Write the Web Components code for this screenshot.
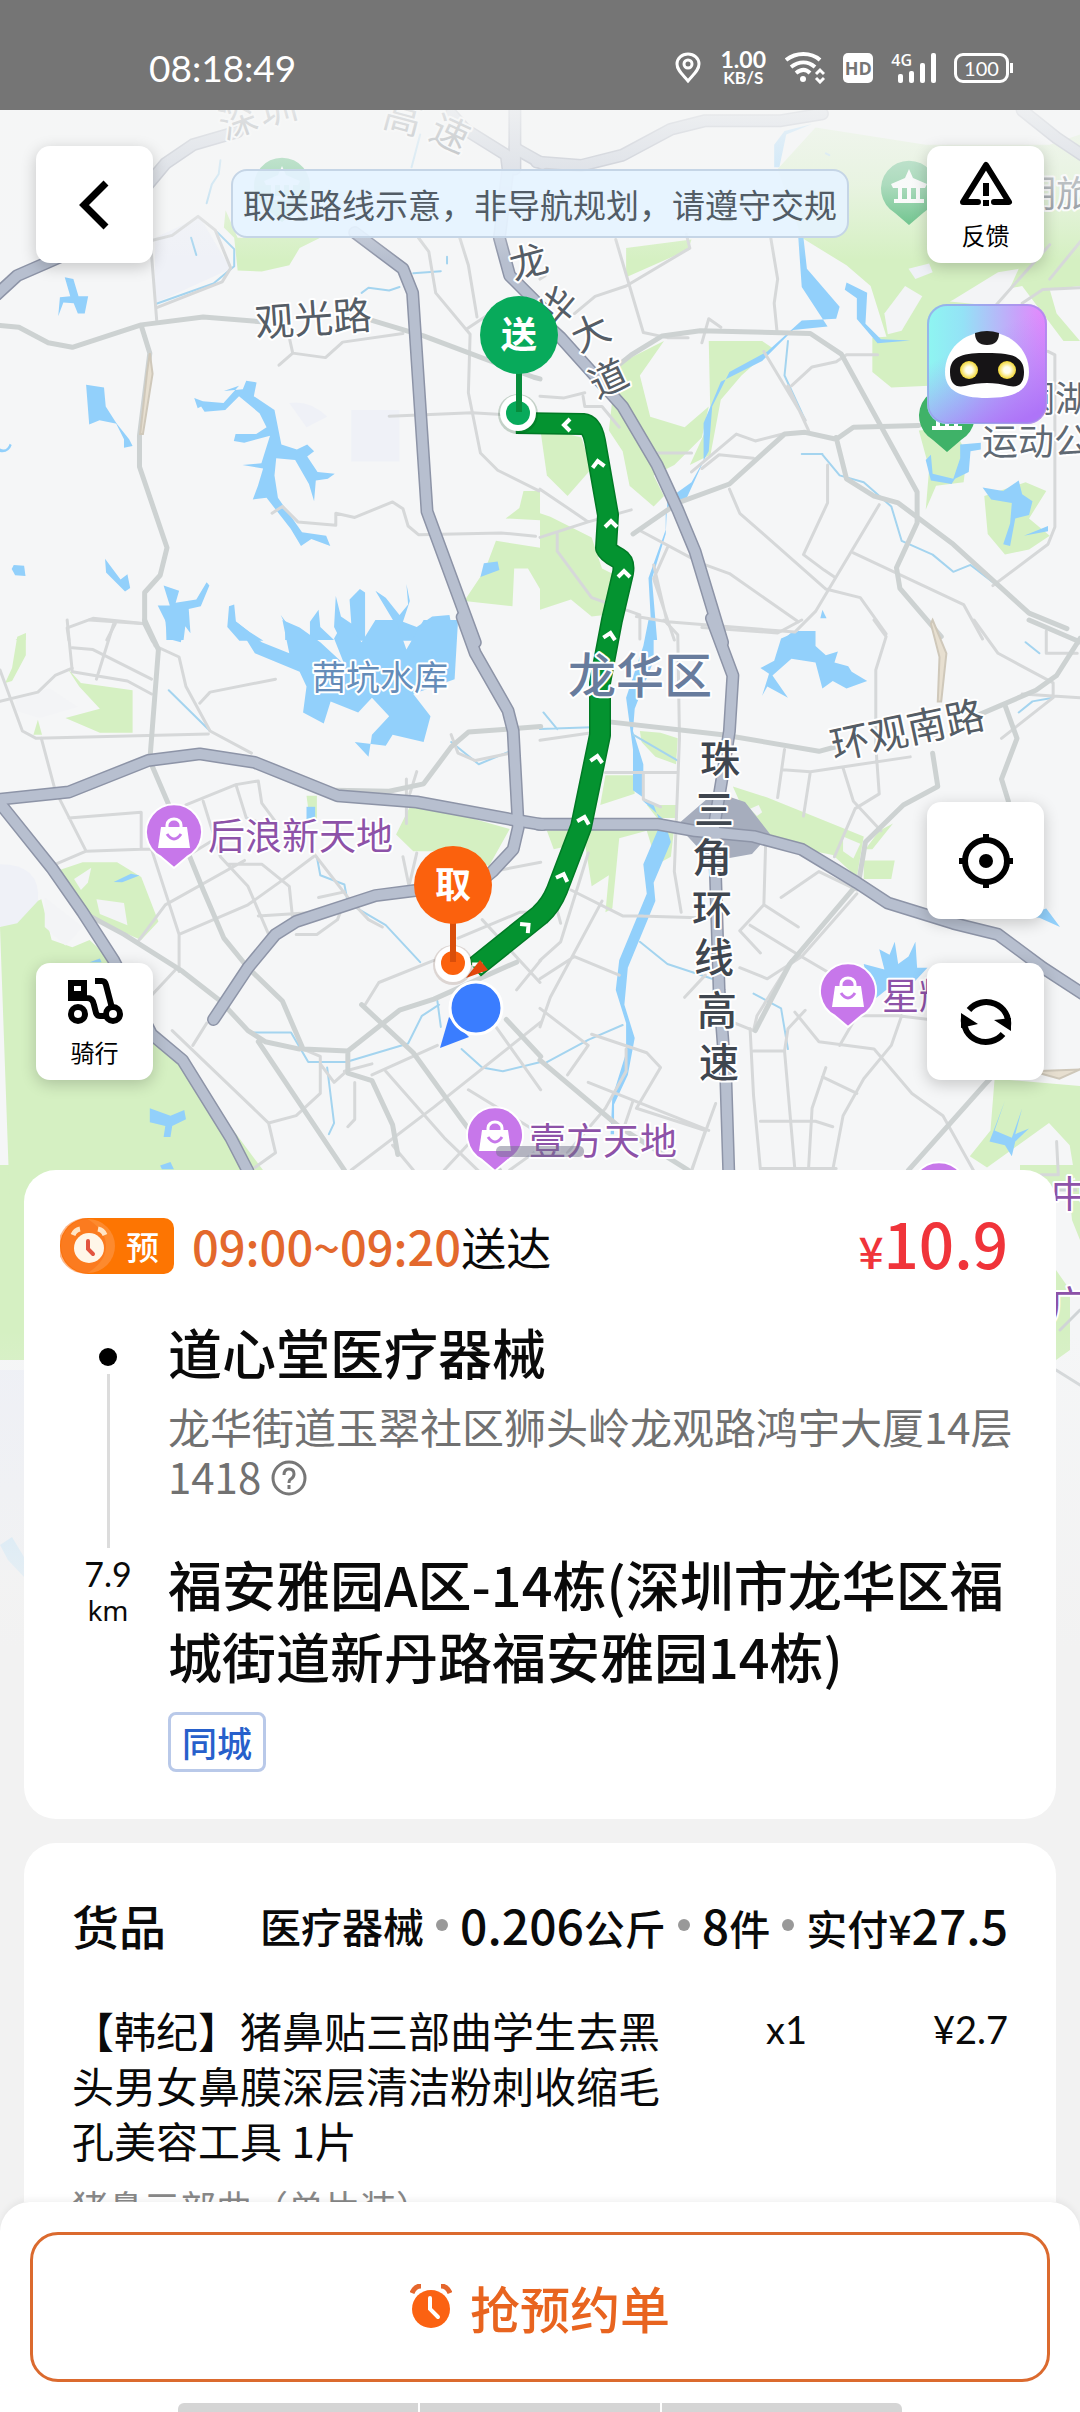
<!DOCTYPE html>
<html lang="zh-CN">
<head>
<meta charset="utf-8">
<meta name="viewport" content="width=device-width">
<title>预约单</title>
<style>
html,body{margin:0;height:100%}
body{font-family:"Noto Sans CJK SC","Noto Sans",sans-serif;color:#0a0a0a;background:#f2f2f2;--num:Lato,"Noto Sans CJK SC",sans-serif;--mid:"Noto Sans CJK SC",sans-serif}
</style>
</head>
<body>
<order-page></order-page>
<script>
const define=(name,html,setup)=>customElements.define(name,class extends HTMLElement{
  constructor(){super();this.attachShadow({mode:'open'}).innerHTML=html;if(setup)setup(this.shadowRoot,this)}
});

define('status-bar',`<style>
:host{display:flex;align-items:center;justify-content:space-between;height:110px;box-sizing:border-box;padding:26px 66px 0 149px;background:#757575;color:#fff;font-family:var(--num)}
time{font-size:37px;line-height:40px}
.icons{display:flex;align-items:center;gap:18px}
svg{display:block}
.rate{display:flex;flex-direction:column;align-items:center;font-size:23px;line-height:20px;font-weight:700;width:48px}
.rate small{font-size:17px;line-height:18px}
.hd{background:#fff;color:#757575;border-radius:5px;font:700 18px/30px "Open Sans",sans-serif;width:30px;text-align:center}
.sig{display:flex}
.sig span{font:600 16px/16px "Open Sans",sans-serif;margin-right:-16px}
.bat{border:3px solid #fff;border-radius:9px;font-size:20px;line-height:24px;width:49px;text-align:center;position:relative;margin-right:5px}
.bat::after{content:"";position:absolute;right:-7px;top:7px;width:3px;height:10px;background:#fff}
</style>
<time>08:18:49</time>
<div class="icons">
<svg width="26" height="32" viewBox="0 0 26 32" fill="none" stroke="#fff" stroke-width="3"><path d="M13 29C7 22 2 18 2 12a11 10 0 0 1 22 0c0 6-5 10-11 17z"/><circle cx="13" cy="12" r="4"/></svg>
<div class="rate"><span>1.00</span><small>KB/S</small></div>
<svg width="40" height="32" viewBox="0 0 40 32" fill="none" stroke="#fff" stroke-width="4"><path d="M1 8c10-8 25-8 34 0M6 15c8-6 17-6 24 0M11 21c5-4 10-4 14 0"/><circle cx="18" cy="27" r="3" fill="#fff" stroke="none"/><path d="M31 22l4-4 4 4M31 26l4 4 4-4" stroke-width="3"/></svg>
<div class="hd">HD</div>
<div class="sig"><span>4G</span><svg width="40" height="32" viewBox="0 0 40 32" fill="#fff"><rect x="2" y="22" width="5" height="9" rx="2"/><rect x="13" y="19" width="5" height="12" rx="2"/><rect x="24" y="11" width="5" height="20" rx="2"/><rect x="35" y="1" width="5" height="30" rx="2"/></svg></div>
<div class="bat">100</div>
</div>`);

/* Map geometry. The city is stored as four tiles, each with its own local grid. */
const tiles=[
{t:'translate(0 100) scale(.3444)',
 green:['M655 320L690 400 930 400 870 430 840 480 760 498 690 495 680 400 650 370z','M1520 1135l48 0v85l-100-5 40-30z','M1440 1280l128 20v120l-35-60-40 0-5 110-140-15 60-90z','M45 1568l30-20v20z'],
 haze:['M450 400l130-60 90 150-220 100z','M1020 900h140v150h-140z','M840 880q60-10 110 40l-60 30z'],
 water:['M188 515l25 5 15 50 28 0-10 50-20 0-12-30-30-2-15 40 5-55 30-3z','M250 827l52 8 5 55 32 50-50-10-30 12z','M335 935l40 50 10 20-25 5 0-25z','M0 1012q20 10 28-14l6 4q-8 24-34 20z','M40 1350l30 2 4 30-30-2-10-18z','M305 1332l45 60 20-15 8 40-15 10-55-55z','M475 1410l45 15-10 35 60-10 30-50 8 10-25 60-35 8 5 70-15-20-5 40h-50l0-50-25-50 35 0z','M650 845l55-5 10-25 30 5-8 40 60 40 20 100 45 15 30-15 20 20-20 15 30 45 50 5-20 15-35 5-5 60-15-50-40-70-55-5-5 50 10 65 70 100 70 10 12 30-55-20-30 20-30-50-70-90-40 5 15-40 15-50-60-10 55-5 25-80-75 20-30-5 5-20 60 0 30-20-20-40-60-50-40 40-60 5-10-15-10 5-10-30 25 10 60 5 45-50z','M665 1470l15-5 5 50 40 30 40 25h-70l-35-40z','M815 1495l30 40 3 33h-20l0-45z','M900 1515l25-35 5 50 40 38h-70z','M975 1440l15 60 30 20-5-70 30-30 15 10 0 75 0 65h-70l-20-40z','M1090 1425l30 20 40 50 25-30-5-60 10 50-20 60 40 15 45-30 50-5 15 75h-200l-20-50 50 5z','M1405 1345l40-5 5 25-55 20z'],
 stream:['M640 175l-5 40-20 30-15 55','M555 400l15 50','M1050 560l20-15 60 8 30-10','M1200 503l80-6M1298 455l0 20','M450 593l170-60 60-50 0-50-50-50','M1220 100l-25 95'],
 minor:['M437 235L440 450 455 640','M440 408l60-15 75-55 50 40 45 110-25 40-190 75','M840 690l10 45-40 35M850 735l95 13 50-45 175-25','M1215 400l30 40 20 120 100 120-5 170 35 175 50 50 120 60','M1335 400l25 80 25 150M1355 665l60-40M1130 918l240-10 160 10','M790 1200l30-20 45 45 110 10 0-35 55 12 110-45 30 20 15 50 30 25 240-5 100 10','M200 1568l-5-35 75-28 145 15M335 1520l-25 48'],
 mid:['M0 655l55 5 85 45 70 13 200-65 180-23 170 14','M1080 640l150 45 320 120 18 5','M410 655l25 80-30 240 0 90 80 235-20 80-45 50 0 90 25 50'],
 tan:['M435 735l8 60-28 175-8 0 20-180z'],
 major:['M690 92L560 130 480 185 300 400 130 475 50 510 -10 565','M1030 385L1170 490 1198 560 1240 1195 1380 1575','M1310 40L1350 85 1470 160 1475 200 1450 400 1480 510 1575 605','M1495 20L1495 200','M1495 140L1575 185']},
{t:'translate(540 100) scale(.3444)',
 green:['M690 200L800 80 1120 130 1480 130 1568 100 1568 540 1480 550 1500 620 1568 700 1520 700 1400 540 1300 560 1150 750 1130 830 1020 835 965 790 965 690 1100 680 1010 700 960 540 890 480 760 400z','M250 430l190-25-10 30-180 80z','M220 780l40-30 100-50-70 100 30 120 100 30 70-60-20 90-80 80-60 30 30 60-30 30-70-60-20-100-40-60z','M490 700l155 0 30 20-90 80-60 70-30 160-60 30 60-130z','M0 950l20 140 60 60 70-80-30-90z','M0 1200l30 10 120 60 30 90 80 40-30 90-80 10-60-50-90 30z','M1100 960l100-10 40 80-10 80-80 10-30 70 10-120z','M1290 1150l120-40 60 25-50 80 60 50-60 40-70 15-50-60z'],
 clear:['M1000 620l60-80 50 30-60 100-40 10z','M1200 580l130-80 60-10-50 110-150-15z'],
 haze:['M1070 490l60-15 10 25-50 20z'],
 water:['M750 400l15 0 10 90 95 110-10 35-100 5-100 90-110 60-50 100-10 130-50 90-70 50-5 100-40 130 15 178h-15l-10-180 50-140 0-60 60-30 50-110 0-110 50-120 120-60 90-90 100-10-75-115z','M890 530l60 30-5 90 45 45 85 3-95 8-60-70 0-60-35-25z','M1220 1000l60-5 0 20-30 5-5 60-40 20-10 15-60-10-15-60 15-15 5 55 60 15 20-60z','M1285 1125l60 10 45-30 10 40 30 20-10 40-40 10-15 80-20-5 20-60 5-60-60-10z','M1405 1265l70-28v15z','M820 1480l12 25h-18z','M705 1568l25-22 65 0 0 22z','M680 130l30-40 80-20-75 30-20 95h-15z'],
 stream:['M720 700l-10 100 60 130M820 1030l50 60 70 20 80 70 30 100 90 40 60 50 50-20 130 100M760 1028l60 0M830 155l10 5'],
 minor:['M220 405l80 270 70 15 60 0M0 520l15-10M100 620l60-50 90-30 185-110-10-40M670 400l20 120-10 70 8 80M470 705l20-70 35 25','M650 730l120 200M720 830l60 130M730 830l60-55 70-15 30-20 90 0','M835 1060l0 110-70 150 60 45 30 20M550 1130l30 70 250 220 100 25 75 105','M0 860l70 5 60-15M125 860l5 30 50 0 50 60M0 1130l140 95 125-35M0 1270l140-45M50 1260l0 50 100 135 140 50 0 70M440 1080l130-110 55 20 80-20M470 1070l50-40 100 10M270 1260l90-60M290 1250l150 80M370 1300l-40 90 60 178M330 1350l40 170M480 1350l70 25 200 140M280 1500l90 15 370 30 60-60 185-310','M910 1315l320 150 55 100M1475 730l20 10 0 500-20 50-160 120M1480 520l90-110 70-2M1320 600l160-180M1400 590l60-40 110-5M340 1025l100 0'],
 mid:['M215 780l50-40 90-55 110-15 320 8 90 60 220 400 0 90-60 130 10 60 120 140','M270 1260l130-90 150-55 160-145 60-5 90 20 50-35 190-5M860 980l30 120 80 50 70 20 160 120 220 200 110 45'],
 major:['M-10 180L120 190 240 160 380 85 480 60 700 60 820 40','M-5 630L60 690 150 790 240 890 340 1060 400 1190 450 1310 530 1575','M1400 30L1500 110 1575 160']},
{t:'translate(0 620) scale(.3444 .3699)',
 green:['M50 45l25-10 0 60-40 70-20 5 20-40z','M195 130l40 40 150 20 0 115-95 0-100-40 100-25-60-60z','M110 270l12 40-25 0z','M0 830l60-50 60-25 30 110 60 20 50-20 70 60 130 200 110 120 200 250 0 120-740 0z','M160 680l80-25 100 0 70 40 50 120-50 50-150-60-50-70z','M890 475l30 0 0 70-20 0z','M1150 580l40-75 60 0 230 60-60 100-130-40-90 0z'],
 clear:['M45 205l100-20 80 50-110 30-70-20z','M130 750l110 80-50 50-60-50z','M215 700l50-30-10 40-20 20z','M280 755l80 10 10 60-80-30z'],
 haze:['M0 660q120 0 110 100l-60 60-50 10z'],
 water:['M480 0h60l-15 60-40-10z','M680 0L740 90 870 140 890 180 880 250 940 280 960 220 1040 250 1080 210 1130 260 1080 310 1070 370 1030 330 1120 340 1140 310 1230 330 1250 260 1200 200 1320 160 1330 0 1230 0 1180 80 1150 0 1090 0 1050 60 1000 0 970 50 1000 120 930 60 870 20 820 0 840 90 760 60z','M890 505h25v35h-25z','M330 708l50-22 25 5-50 18z','M435 1320l60 20 40-15 5 25-40 18-5 30-20 0 5-30-45-10z','M465 1475l30-10 10 20h-35z','M260 925l30-10 5 10z'],
 stream:['M490 190l120 110M920 640l10 50 70 25 10 50 110 60 100 100M725 1115l120 0 50 80 110 0 180-50 40-75 50-30M950 1210l20 150-15 30M1270 1030l10 70M1340 1160l60 50 60 10 110-25M1310 330l80 60 90-35'],
 minor:['M195 0l15 140 160 25 70 35M210 75l60 5 170 80M330 10l-50 150M0 220l110-25 50-45 50-20M0 135l65 165 40 20 500-12M260 0l160 10 30 60 70 30 20 80 70 120 120 60M580 225l30-30 190-35','M120 320l40 140 90 165 160-5 0-100-210 15M410 620l30 0 80 230 0 100M150 665l100-40M540 500l145-55 65-10 10 60 40 50M685 445l30 90 60 20M590 490l50 150 80 80 60 130M480 770l230-120M520 850l200-80 90-60 100-70M400 870l80-100M750 800l170-10M910 630l100 120 60 60 40 20M860 850l60 0 60-40 20-50M660 660l100 0 80 60 10 90M610 600l-70 40','M600 1090l-40 60M500 1110l280 250 20 80-60 40M780 1360l80-20 70-60 0-100-50-20M515 940l-80 80M930 1200l40 50 30-25M1030 1250l0 100-20 20M1170 640l20 90M1060 1040l40-60 160-60M1190 710l20-80M925 750l75-15M1190 470l20-60 M1310 310l20 50 50 20 100-20','M1080 1230l190-80M1120 1220l170 180 100 90M1020 1487l240-170 310-230M1000 1220l80-20M1360 1270l210 120M1400 810l168 170M1330 860l180-70 60 0M1440 1100l130 170M1500 1000l70-80M1480 1487l90-60M1290 1487l110-110M1140 1420l60 67','M1180 430l0 120M1430 680l140-25'],
 mid:['M420 0l40 80-25 300 60 130M490 500l100 230 60 130 70 80 100 90 60 130 130 5 0 60 70 20 60 120 15 80M260 800l100 50 170 100 110 80 80 80 50 30 100 20M750 1140l250 347M1050 1040l150 130 140 180 110 137M1010 1165l150-110 100-30 240-100M1470 1080l100 100M970 460l160 3 100-20 80-100 50-40 210-15'],
 major:['M-5 485L200 465 430 380 580 362 740 385 980 475 1210 492 1490 540 1575 553','M-5 490L150 670 240 790 330 920 440 1120 530 1190 670 1400 720 1490','M1342 -8L1380 90 1475 245 1490 300 1505 560 1490 620 1430 680 1390 710 1200 732 1090 745 860 815 800 850 720 940 620 1080']},
{t:'translate(540 620) scale(.3444 .3699)',
 green:['M290 300l60 5 50 15-5 70-60-20-40-40z','M190 420l80 0 5 50-100 30z','M20 570l370-10-10 80-40 20-30-90-80 20-20 190-20 10 10-100-50 30-20-120-90 20z','M560 450l100 30 280 105-20 110-70-60-160-30-80-50z','M945 620l40-50 40-20-60 70zM940 650l90 0-10 50-80 0z','M310 500h90v35h-60z','M1320 1240l248 20 0 330-30-170-60-60-180 120-50-30 60-70z'],
 clear:['M880 585l50 20-20 40-30-20z','M610 510l25-10 10 20-15 10z'],
 water:['M315 0h15l0 110-55 130-5 60 30 90 0 100 60 50 20 60-50 110 5 50-80 180-10 100 30 90-20 100-40 80 0 80h-10l5-100 40-120 0-80-30-90 10-80 80-180-10-80 50-110-20-50-60-40 0-110-10-70-10-70 50-140z','M640 130l40-20 20-60 50-20 50 0 0 40 30 25 35-10-10 30 40 10 10 15 45 25-60 20-40-20-30 20-20-70-70-10-55 45 45 60-60-30-15 25 20-60z','M1400 800l70-20 40 50-60-25z','M940 930l60 15-15-55 30 15 15-35 10 60 30-20 20-40 5 70 30 0-50 50-70 10-40 30z','M1350 1300l-30 80 50 20 30-80-20 70 40-15-40 35-10 40-20-30-45-10z'],
 stream:['M0 295l150-5M10 250l40 45M270 310l130 70M290 870l80 60 130 40M620 1010l80 40 20 110M20 1195l120-60 100-40M1410 60l40 30M1390 250l40-30 60-10'],
 minor:['M0 325l150-20M190 412l210 0M300 415l0 70 50 20M360 0l40 40 5 280-15 360 20 110M970 0l35 45-30 90 0 200M470 20l220 15 70-35M1260 0l70 90 160 80 0 40-150 110M1470 30l0 60 90 0M1400 200l168 10','M710 350l-20 130M705 405l80 5 290-40M785 410l-20 120M880 400l30 90 80 80M975 340l10 130-70 40-60 130M700 750l110-70 110 50M655 610l-5 160-70 70 60 60M650 770l100 60M1140 300l10 20','M290 800l170 5M180 760l-150 260-30 80M90 730l150 70 60 0M0 920l60-50 80-240M0 970l100-60 130 50M60 820l-20-70M610 825l140 80 110 60M580 940l80 30 100-60 160-170M540 1080l80 30 10-40 100-150M420 1020l60-60M0 1050l140 100-60 80M150 1120l160 50 40 40-70 110 200 60-40 110M80 1440l110-120 60-100 0-60M140 1250l350 130M270 1300l-40 110M440 1487l70-180','M620 1165l90 0 30 320M610 1105l10 180 20 200M710 1165l10-60 50-50M640 1355l160 0 50 15M640 1483l220 0M740 1060l70 80 160 20 110 120 90 60 90 150M1050 1070l-30 80-80 90-60 100-30 147M830 1210l-40 110-10 160M820 1235l100 45M870 1150l50-80 120 0 90 10','M1500 1410l5 90-50 0'],
 mid:['M150 270l380 40 280 45 60-15M1240 270l200-80 60-40 68-100M1350 230l35 90-45 110 20 60M1140 360l15 90-100 50-110 100-20 110-200 220-100 180M1070 1487l220-230 60-60M1420 0l150 60M0 1190l230 180 200 117'],
 tan:['M1140 0l40 90-15 130-10 0 5-120-25-90z','M1430 1220l138-5-60 25z'],
 major:['M498 -5L560 150 550 300 530 420 505 560 510 700 520 1000 540 1250 548 1490','M-5 552L340 552 450 570 620 585 760 620 920 710 1010 765 1200 820 1330 850 1460 940 1575 1010']}
];
const layer=(key,attrs)=>tiles.map(t=>(t[key]?`<g transform="${t.t}" ${attrs}>${t[key].map(d=>`<path d="${d}"/>`).join('')}</g>`:'')).join('');
const line=(c,w)=>`fill="none" stroke="${c}" stroke-width="${w}" stroke-linejoin="round" stroke-linecap="round"`;
const bagPin=(x,y)=>`<g transform="translate(${x} ${y})"><path d="M0 34L-13 23A28 28 0 1 1 13 23z" fill="#c777ea" stroke="#fff" stroke-width="2"/><path d="M-13-7h26l3 21h-32z" fill="#fff"/><path d="M-7-6v-3a7 6 0 0 1 14 0v3" fill="none" stroke="#fff" stroke-width="3"/><path d="M-7 0q7 10 14 0" fill="none" stroke="#c777ea" stroke-width="3"/></g>`;
const parkPin=(x,y)=>`<g transform="translate(${x} ${y})"><path d="M0 36L-14 24A28 28 0 1 1 14 24z" fill="#3fb268"/><path d="M0-20l4 9 14 6-2 4h-32l-2-4 14-6zM-11-1h4v11h-4zM-2-1h4v11h-4zM7-1h4v11h-4zM-15 10h30v4h-30z" fill="#fff"/></g>`;
const chevrons=[[566,425,-90],[598,463,-8],[611,523,0],[624,573,0],[610,635,12],[597,758,10],[584,819,15],[563,876,20],[527,926,50],[479,966,45]];
const route='M516 423L583 424Q592 425 595 441L608 515 606 548Q608 553 618 558 625 562 623 573L612 620 600 683 600 735 581 827 557 890 Q551 905 540 915L474 968';

define('city-map',`<style>
:host{display:block;overflow:hidden}
svg{display:block;width:100%}
path{vector-effect:non-scaling-stroke}
text{font-family:"Noto Sans CJK SC",sans-serif;paint-order:stroke;stroke:#fff;stroke-width:4px;stroke-linejoin:round}
.poi{fill:#8d52a8;font-size:37px}.road{fill:#555d66;font-size:38px}.park{fill:#5f6973;font-size:36px}
.mid{text-anchor:middle}.pin{fill:#fff;stroke:none;font-size:36px;font-weight:700;text-anchor:middle}
</style>
<svg viewBox="0 110 1080 1690" aria-label="地图">
<defs>
<linearGradient id="top" x1="0" y1="0" x2="0" y2="1"><stop offset="0" stop-color="#f5f6f6" stop-opacity=".88"/><stop offset=".5" stop-color="#f5f6f6" stop-opacity=".6"/><stop offset="1" stop-color="#f5f6f6" stop-opacity="0"/></linearGradient>
<linearGradient id="end" x1="0" y1="0" x2="0" y2="1"><stop offset="0" stop-color="#f2f2f2" stop-opacity="0"/><stop offset="1" stop-color="#f2f2f2"/></linearGradient>
</defs>
<path fill="#f5f6f7" d="M0 110h1080v1690H0z"/>
<path fill="#d5f0c2" d="M0 1165h60v195H0zM1020 1165h60v10l-40 20-20 10zM1068 1180h12v60l-8-20zM1056 1270l14 20v60l-14 10z"/>
<path fill="#eef0f6" d="M0 1370h24v200H0z"/><path fill="#b9e1fb" d="M0 1545l12-8 12 20v20L8 1560z"/>
<path ${line('#d0d4d6',3)} d="M1056 1190h24M1060 1330l20-20M1056 1370l24 15"/>
${layer('green','fill="#d5f0c2"')}${layer('clear','fill="#f3f4f6"')}${layer('haze','fill="#eff1f7"')}${layer('water','fill="#92d0fb"')}${layer('stream',line('#a4d4ef',2))}
${layer('minor',line('#d6d8d9',3))}${layer('mid',line('#cdd2d2',5))}${layer('tan','fill="#e7dfd0" stroke="#cfc8ba" stroke-width="2"')}
<path fill="#a6adbd" d="M677 825l38-33 30 10 25 32-18 20-28 5-8 8z"/>
${layer('major',line('#8d94a7',13))}${layer('major',line('#b7bfcf',10))}
${parkPin(282,186)}${parkPin(909,189)}${parkPin(947,416)}
<text class="road mid" x="244 282 400 446" y="140 127 126 138" rotate="-20 -15 15 25">深圳高速</text>
<text class="park" x="1020" y="207">明旅</text>
<path fill="url(#top)" d="M0 110h1080v150H0z"/>
<path fill="none" stroke="#007a25" stroke-width="22" stroke-linejoin="round" d="${route}"/>
<path fill="none" stroke="#049330" stroke-width="19" stroke-linejoin="round" d="${route}"/>
<g fill="none" stroke="#fff" stroke-width="4">${chevrons.map(c=>`<path transform="translate(${c[0]} ${c[1]}) rotate(${c[2]})" d="M-6 4L0-2 6 4"/>`).join('')}</g>
${bagPin(174,834)}${bagPin(495,1137)}${bagPin(848,993)}${bagPin(939,1192)}
<text class="road" x="256" y="337" transform="rotate(-4 256 337)" style="font-size:39px">观光路</text>
<text class="road mid" x="533 575 598 616" y="280 330 353 399" rotate="-15 -50 -25 -25">龙华大道</text>
<text class="road mid" x="720 714 712 712 714 717 719" y="774 824 872 924 972 1025 1077" style="fill:#3f464f;font-size:40px;font-weight:500">珠三角环线高速</text>
<text class="road" x="834" y="760" transform="rotate(-12 834 760)" style="font-size:39px">环观南路</text>
<text x="568" y="693" font-size="48" style="fill:#687c9d;font-weight:500">龙华区</text>
<text x="312" y="690" font-size="34" style="fill:#648cb9">茜坑水库</text>
<text class="poi" x="208" y="850">后浪新天地</text><text class="poi" x="529" y="1155">壹方天地</text><text class="poi" x="882" y="1010">星耀</text>
<text class="poi" x="1051" y="1208">中</text><text class="poi" x="1050" y="1318">广</text>
<text class="park" x="1019" y="412">澜湖</text><text class="park" x="982" y="455">运动公</text>
<circle cx="518" cy="414" r="20" fill="#00400f" fill-opacity=".2"/><circle cx="518" cy="413" r="18" fill="#fff"/><circle cx="518" cy="413" r="12" fill="#08aa5b"/><path d="M519 370v42" stroke="#078c3c" stroke-width="6"/><circle cx="519" cy="335" r="39" fill="#08aa5b"/><text class="pin" x="519" y="348">送</text>
<path d="M466 978L480 960 488 970z" fill="#e3470c"/><circle cx="453" cy="965" r="20" fill="#501800" fill-opacity=".15"/><circle cx="453" cy="964" r="18" fill="#fff"/><circle cx="453" cy="963" r="12" fill="#fb610d"/><path d="M453 920v42" stroke="#d94e0a" stroke-width="6"/><circle cx="453" cy="885" r="39" fill="#fb610d"/><text class="pin" x="453" y="898">取</text>
<path d="M440 1048L449 1017 469 1037z" fill="#3a7dff"/><circle cx="476" cy="1008" r="26" fill="#3a7dff" stroke="#fff" stroke-width="3"/>
<rect x="496" y="1146" width="88" height="11" rx="5" fill="#71718a" fill-opacity=".5"/>
<path fill="url(#end)" d="M0 1330h1080v320H0z"/><path fill="#f2f2f2" d="M0 1649h1080v151H0z"/>
</svg>`);

define('map-button',`<style>
:host{display:block;width:117px;height:117px}
button{all:unset;box-sizing:border-box;width:100%;height:100%;border-radius:14px;background:#fff;box-shadow:0 4px 16px #0003;display:flex;flex-direction:column;align-items:center;justify-content:center;gap:9px;font-size:24px;line-height:28px;color:#000}
</style><button><slot></slot></button>`,(root,el)=>root.querySelector('button').setAttribute('aria-label',el.getAttribute('label')||''));

define('map-controls',`<style>
:host{display:grid;grid-template-columns:117px 1fr 120px;height:1060px;box-sizing:border-box;padding:36px 33px 90px 36px}
.l,.r{display:flex;flex-direction:column}
.l{justify-content:space-between}
.n{justify-self:center;align-self:start;margin-top:23px;box-sizing:border-box;padding:1px 10px 0;border:2px solid #c5d5e6;border-radius:16px;background:#e6f3ffe8;color:#525c66;font-size:33px;line-height:64px;white-space:nowrap}
.bot{margin:41px 0 auto;display:block;border:0;padding:0;background:none;width:120px;height:120px}
.r map-button:last-child{margin-top:44px}
svg{display:block}
span{padding-top:4px}
</style>
<div class="l">
<map-button label="返回"><svg width="34" height="52" viewBox="0 0 34 52"><path d="M28 4L6 26l22 22" fill="none" stroke="#000" stroke-width="7"/></svg></map-button>
<map-button label="骑行"><svg width="56" height="48" viewBox="0 0 56 48" fill="none" stroke="#000" stroke-width="6"><path d="M4 6h13v11H4zM1 21h19q6 0 7 7l2 8q1 3 4 3h5M28 4h7q3 0 4 4l6 23"/><circle cx="11" cy="37" r="7"/><circle cx="46" cy="37" r="7"/></svg><span>骑行</span></map-button>
</div>
<div class="n">取送路线示意，非导航规划，请遵守交规</div>
<div class="r">
<map-button label="反馈"><svg width="54" height="48" viewBox="0 0 54 48" fill="none" stroke="#000" stroke-width="6" stroke-linejoin="round"><path d="M19 42H4L27 5l23 37H35" stroke-linecap="round"/><path d="M27 23v13M27 40v6"/></svg><span>反馈</span></map-button>
<button class="bot" aria-label="智能助手"><svg width="120" height="120" viewBox="0 0 120 120">
<defs><linearGradient id="g" x1="0" y1="0" x2="1" y2="0"><stop offset="0" stop-color="#8ef6f1"/><stop offset=".3" stop-color="#94e2f6"/><stop offset=".75" stop-color="#c8a2fa"/><stop offset="1" stop-color="#ea84fd"/></linearGradient><linearGradient id="h" x1=".4" y1=".3" x2=".75" y2="1"><stop offset="0" stop-color="#a890f8" stop-opacity="0"/><stop offset="1" stop-color="#ae74f8"/></linearGradient><radialGradient id="e"><stop offset=".35" stop-color="#fffef0"/><stop offset="1" stop-color="#f3d72f"/></radialGradient></defs>
<rect width="120" height="120" rx="20" fill="url(#g)"/><rect x="1" y="1" width="118" height="118" rx="19" fill="url(#h)" stroke="#9a8ee6" stroke-opacity=".6" stroke-width="2"/>
<path d="M60 28c24 0 42 18 42 40 0 18-14 26-42 26S18 86 18 68c0-22 18-40 42-40z" fill="#fff"/><path d="M48 29q12-4 24 0 0 12-12 12T48 29z" fill="#1c1a1c"/>
<path d="M60 49c22 0 37 2 37 19 0 12-6 16-15 14-14-4-30-4-44 0-9 2-15-2-15-14 0-17 15-19 37-19z" fill="#161416"/><circle cx="42" cy="66" r="9" fill="url(#e)"/><circle cx="80" cy="66" r="9" fill="url(#e)"/></svg></button>
<map-button label="定位"><svg width="56" height="56" viewBox="0 0 56 56" fill="none" stroke="#000" stroke-width="6"><circle cx="28" cy="28" r="21"/><path d="M28 1v8M28 47v8M1 28h8M47 28h8"/><circle cx="28" cy="28" r="7" fill="#000" stroke="none"/></svg></map-button>
<map-button label="刷新"><svg width="52" height="52" viewBox="0 0 52 52" fill="none" stroke="#000" stroke-width="6"><path d="M9 14a22 21 0 0 1 39 16M43 38A22 21 0 0 1 4 22"/><path d="M34 24l17-2 0 13zM18 28l-17 4V17z" fill="#000" stroke="none"/></svg></map-button>
</div>`);

define('sheet-card',`<style>:host{display:block;background:#fff;border-radius:32px;box-sizing:border-box}</style><slot></slot>`);

define('trip-card',`<style>
sheet-card{padding:44px 48px 46px 36px;height:649px}
header{display:flex;align-items:center;height:64px}
.badge{display:flex;align-items:center;box-sizing:border-box;width:114px;height:56px;border-radius:28px 10px 10px 28px;background:#fd7502;color:#fff;font-size:33px;font-weight:500;line-height:56px}
.badge svg{display:block;margin-right:11px}
.time{margin-left:18px;font-size:45px;line-height:66px}
.time b{font:500 47px/66px var(--mid);color:#e3682c}
.price{margin-left:auto;font:500 44px/64px var(--mid);color:#f0343a}
.price b{font:inherit;font-size:62px}
.route{display:grid;grid-template-columns:96px 1fr;padding-left:12px;margin:34px -6px 0 0}
.rail{display:flex;flex-direction:column;align-items:center;width:72px}
.dot{width:18px;height:18px;border-radius:50%;background:#000;margin:36px 0 8px}
.bar{width:3px;flex:1;background:#dcdcdc}
.km{width:72px;text-align:center;font:400 34px/36px var(--num);padding-top:8px}
.km small{display:block;font-size:28px;line-height:36px;font-family:"Noto Sans",sans-serif}
h2{margin:0;font-size:54px;line-height:72px;font-weight:500}
.from h2{line-height:80px}
.from p{margin:9px 0 47px;font-size:42px;line-height:50px;color:#717171;white-space:nowrap}
.from svg{vertical-align:-2px}
.tag{display:inline-block;margin-top:20px;border:3px solid #b9c9e9;border-radius:8px;padding:0 11px;font-size:35px;line-height:54px;font-weight:500;color:#2760cb}
</style>
<sheet-card>
<header><span class="badge"><svg width="55" height="56" viewBox="0 0 55 56"><circle cx="28" cy="28" r="27" fill="#fd8a2e"/><path d="M26 0a28 28 0 0 0 0 56q20-12 20-28T26 0z" fill="#fa6c10" opacity=".5"/><circle cx="29" cy="30" r="15" fill="#fff6e8"/><path d="M13 17q2-5 7-6M38 11q5 1 7 6" stroke="#ffe5c6" stroke-width="5" fill="none"/><path d="M28 23v8l5 5" stroke="#e25440" stroke-width="4" fill="none" stroke-linecap="round"/></svg>预</span>
<span class="time"><b>09:00~09:20</b>送达</span><span class="price">¥<b>10.9</b></span></header>
<div class="route">
<div class="rail"><i class="dot"></i><i class="bar"></i></div>
<div class="from"><h2>道心堂医疗器械</h2><p>龙华街道玉翠社区狮头岭龙观路鸿宇大厦14层<br>1418 <svg width="36" height="36" viewBox="0 0 36 36" fill="none" stroke="#777" stroke-width="3"><circle cx="18" cy="18" r="16"/><path d="M13 15q0-6 5-6t5 5q0 3-3 5-2 1-2 4M18 25v4"/></svg></p></div>
<div class="km">7.9<small>km</small></div>
<div class="to"><h2>福安雅园A区-14栋(深圳市龙华区福城街道新丹路福安雅园14栋)</h2><span class="tag">同城</span></div>
</div>
</sheet-card>`);

define('goods-card',`<style>
sheet-card{padding:47px 48px}
header{display:flex;align-items:center;justify-content:space-between;height:70px}
h3{margin:0;font-size:47px;line-height:70px;font-weight:500}
.sum{display:flex;align-items:center;gap:12px;font-size:41px;line-height:70px;font-weight:500}
.sum b{font:500 48px/70px var(--mid)}
.sum i{width:12px;height:12px;border-radius:50%;background:#999}
table{width:100%;border-collapse:collapse;margin-top:42px;font-size:42px;line-height:55px}
td{padding:0;vertical-align:top;text-align:left;font-weight:400}
.name{width:588px}.qty{padding-left:106px}.cost{text-align:right}
.qty,.cost{font-family:var(--num);font-size:38px}
small{display:block;margin-top:12px;font-size:36px;line-height:54px;color:#888}
</style>
<sheet-card>
<header><h3>货品</h3><div class="sum"><span>医疗器械</span><i></i><span><b>0.206</b>公斤</span><i></i><span><b>8</b>件</span><i></i><span>实付¥<b>27.5</b></span></div></header>
<table><tr><td class="name">【韩纪】猪鼻贴三部曲学生去黑头男女鼻膜深层清洁粉刺收缩毛孔美容工具 1片<small>猪鼻三部曲（单片装）</small></td><td class="qty">x1</td><td class="cost">¥2.7</td></tr></table>
</sheet-card>`);

define('action-bar',`<style>
:host{display:block;box-sizing:border-box;background:#fff;border-radius:30px 30px 0 0;padding:30px 30px 0;box-shadow:0 -3px 6px #0000000d}
button{all:unset;box-sizing:border-box;display:flex;align-items:center;justify-content:center;gap:18px;width:100%;height:150px;border:3px solid #db6a2e;border-radius:28px;color:#e8641f;font-size:50px;line-height:60px;font-weight:500}
.home{display:flex;gap:2px;width:71%;height:9px;margin:21px auto 0;border-radius:6px 6px 0 0;overflow:hidden}
.home i{flex:1;background:#d5d5d5}
</style>
<button><svg width="42" height="46" viewBox="0 0 42 46"><circle cx="21" cy="25" r="19" fill="#fb6212"/><path d="M2 9q3-7 9-7M31 2q6 0 9 7" stroke="#e5662c" stroke-width="5" fill="none"/><path d="M20 14v11l8 8" stroke="#fff" stroke-width="4" fill="none" stroke-linecap="round"/></svg><span>抢预约单</span></button>
<div class="home"><i></i><i></i><i></i></div>`);

define('order-page',`<style>
:host{display:flex;flex-direction:column;height:100vh;overflow:hidden}
main{flex:1;min-height:0;overflow:hidden;display:grid;grid-template-columns:100%;background:#f2f2f2;align-items:start}
main>*{grid-area:1/1}
.sheet{display:flex;flex-direction:column;gap:24px;padding:1060px 24px 0}
</style>
<status-bar></status-bar>
<main><city-map></city-map><div class="sheet"><trip-card></trip-card><goods-card></goods-card></div><map-controls></map-controls></main>
<action-bar></action-bar>`);
</script>
</body>
</html>
